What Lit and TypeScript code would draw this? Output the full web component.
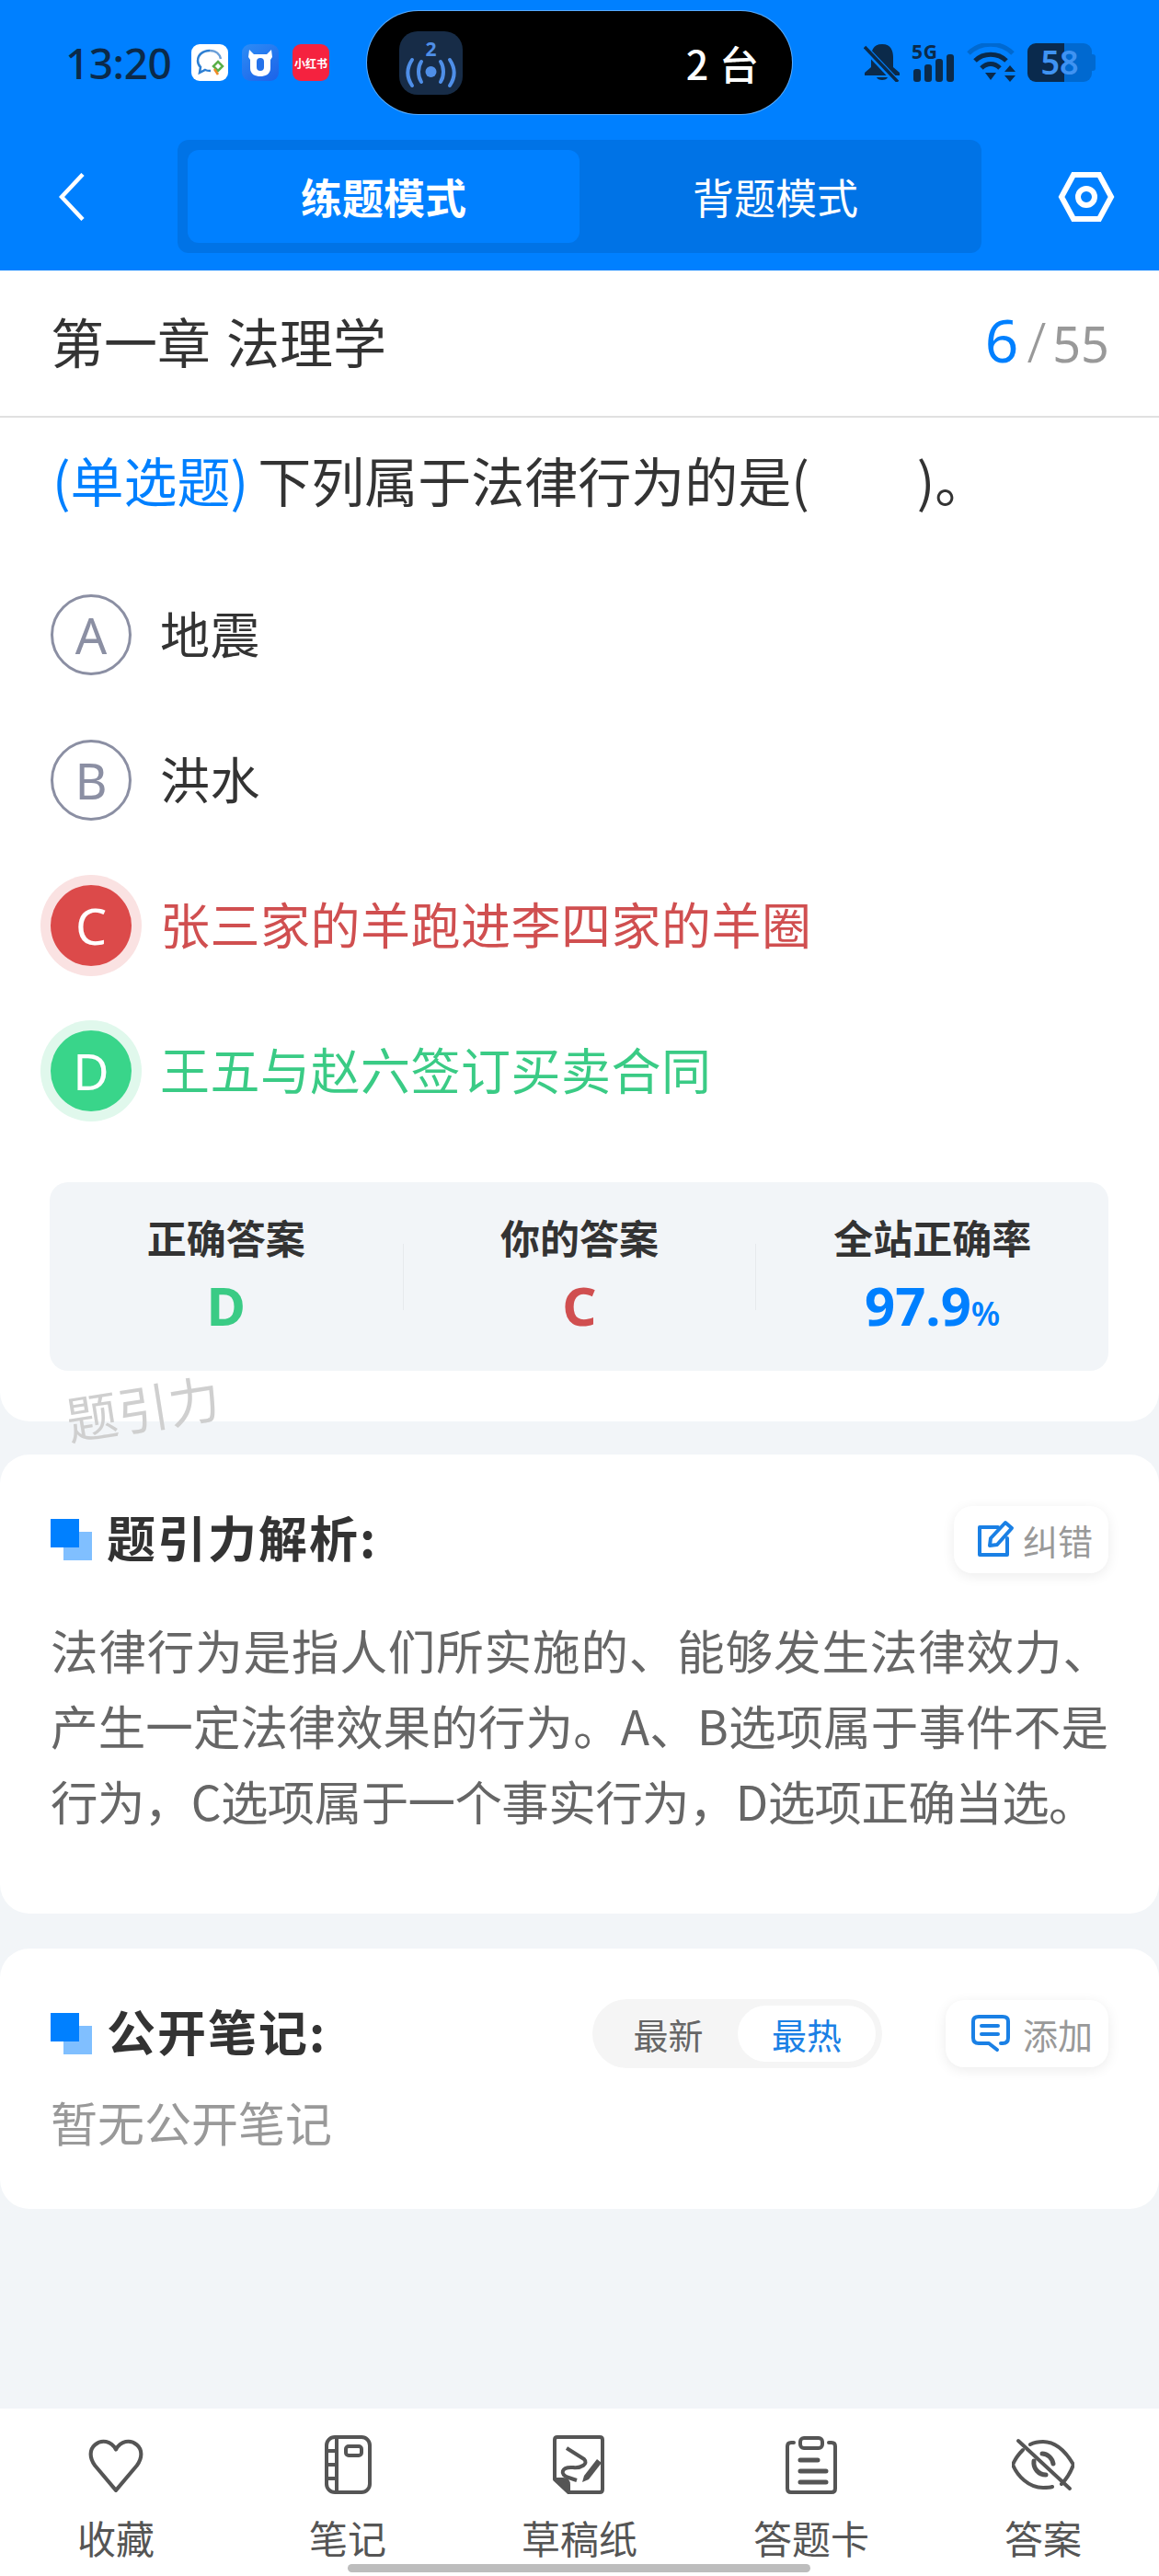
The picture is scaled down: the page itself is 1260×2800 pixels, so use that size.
import { LitElement, html, css, svg } from 'lit';
import { customElement } from 'lit/decorators.js';

type Mark = '' | 'wrong' | 'right';

const options: { key: string; text: string; mark: Mark }[] = [
  { key: 'A', text: '地震', mark: '' },
  { key: 'B', text: '洪水', mark: '' },
  { key: 'C', text: '张三家的羊跑进李四家的羊圈', mark: 'wrong' },
  { key: 'D', text: '王五与赵六签订买卖合同', mark: 'right' },
];

const heart = svg`<path d="M31 55 L9 29 C3 21 3 12 9 7 C16 1 26 3 31 12 C36 3 46 1 53 7 C59 12 59 21 53 29 Z" />`;
const notebook = svg`<rect x="9" y="2" width="47" height="60" rx="9" /><path d="M20 2 V62 M9 17 H20 M9 32 H20 M9 47 H20" /><rect x="30" y="12" width="17" height="10" rx="3" />`;
const draft = svg`<path d="M8 2 H54 Q57 2 57 5 V59 Q57 62 54 62 H20 L5 48 V5 Q5 2 8 2 Z" /><path d="M5 48 H14 Q20 48 20 54 V62" fill="#555" /><path d="M18 14 L37 26 C42 31 34 36 25 35 C12 34 10 43 20 46 L29 49" /><path d="M37 44 L51 26 L56 30 L42 48 L35 51 Z" fill="#555" stroke="none" />`;
const card = svg`<path d="M13 8 H10 Q6 8 6 12 V58 Q6 62 10 62 H54 Q58 62 58 58 V12 Q58 8 54 8 H51" /><rect x="20" y="3" width="24" height="11" rx="4" /><path d="M20 27 H39 M20 39 H48 M20 51 H48" stroke-width="5" />`;
const eye = svg`<path d="M20 10 C24 8 30 7 34 7 C50 7 60 20 67 32 C64 40 60 47 54 53" /><path d="M12 16 C7 21 3 27 1 32 C6 44 18 57 34 57 C38 57 41 57 44 56" /><path d="M33 20 C39 20 44 25 45 31 M24 28 C23 36 29 43 37 43" stroke-width="5" /><path d="M7 6 L63 58" />`;

@customElement('tab-item')
class TabItem extends LitElement {
  static properties = { label: { type: String } };
  label = '';

  static styles = css`
    :host {
      flex: 1;
      display: flex;
      flex-direction: column;
      align-items: center;
    }
    span {
      margin-top: 18px;
      font-size: 42px;
      line-height: 58px;
      color: #555;
    }
  `;

  render() {
    return html`<slot></slot><span>${this.label}</span>`;
  }
}

@customElement('app-root')
export class AppRoot extends LitElement {
  static styles = css`
    :host {
      display: block;
      width: 1260px;
      height: 2800px;
      position: relative;
      overflow: hidden;
      background: #f2f5f8;
      font-family: 'Noto Sans CJK SC', 'Noto Sans', sans-serif;
      color: #333;
    }
    .top {
      height: 294px;
      background: #0080ff;
    }
    .status {
      height: 152px;
      padding-left: 71px;
      display: flex;
      align-items: flex-start;
      box-sizing: border-box;
    }
    .time {
      margin-top: 38px;
      width: 137px;
      font-family: 'Noto Sans', sans-serif;
      font-size: 46px;
      font-weight: 500;
      line-height: 60px;
      color: #0b2a4a;
      letter-spacing: -0.5px;
    }
    .apps {
      margin-top: 48px;
      display: flex;
      gap: 15px;
    }
    .app {
      width: 40px;
      height: 40px;
      border-radius: 9px;
      display: flex;
      align-items: center;
      justify-content: center;
      overflow: hidden;
    }
    .app svg {
      width: 40px;
      height: 40px;
    }
    .app.white {
      background: #fff;
    }
    .app.blue {
      background: linear-gradient(145deg, #2d8cf5, #1c62e8);
    }
    .app.red {
      background: #f5223f;
      color: #fff;
      font-size: 12px;
      font-weight: 700;
      white-space: nowrap;
    }
    .island {
      margin: 12px 0 0 41px;
      width: 462px;
      height: 112px;
      box-sizing: border-box;
      border-radius: 56px;
      background: #000;
      box-shadow: 0 0 0 1px rgba(255, 255, 255, 0.35);
      display: flex;
      align-items: center;
      padding: 0 36px 0 35px;
      justify-content: space-between;
    }
    .island svg {
      width: 69px;
      height: 69px;
      display: block;
    }
    .island b {
      font-family: 'Noto Sans CJK SC', sans-serif;
      font-weight: 500;
      font-size: 43px;
      color: #fff;
      word-spacing: 2px;
    }
    .sys {
      margin: 47px 0 0 78px;
      display: flex;
      align-items: flex-start;
      color: #0b2a4a;
    }
    .sys svg {
      display: block;
      height: 42px;
    }
    .battery {
      margin-left: 12px;
      width: 70px;
      height: 42px;
      border-radius: 9px;
      background: linear-gradient(90deg, #0a2a4d 0 40px, #0069d0 40px);
      color: #3f93f2;
      font-family: 'Noto Sans', sans-serif;
      font-size: 36px;
      font-weight: 600;
      line-height: 42px;
      text-align: center;
    }
    .nub {
      width: 4px;
      height: 18px;
      margin-top: 12px;
      border-radius: 0 3px 3px 0;
      background: #0069d0;
    }
    .nav {
      height: 123px;
      display: flex;
      align-items: center;
    }
    .back {
      width: 28px;
      height: 52px;
      margin-left: 64px;
      fill: none;
      stroke: #fff;
      stroke-width: 4.5;
    }
    .seg {
      margin-left: 101px;
      width: 874px;
      height: 123px;
      box-sizing: border-box;
      padding: 11px;
      border-radius: 12px;
      background: #0073e6;
      display: flex;
    }
    .seg div {
      flex: 1;
      border-radius: 12px;
      display: flex;
      align-items: center;
      justify-content: center;
      font-size: 45px;
      color: #fff;
    }
    .seg .on {
      background: #0080ff;
      font-weight: 700;
    }
    .hex {
      width: 62px;
      height: 56px;
      margin-left: 83px;
      fill: none;
      stroke: #fff;
      stroke-width: 6;
    }
    .card {
      background: #fff;
      border-radius: 32px;
      margin-bottom: 36px;
    }
    .main {
      height: 1251px;
      border-radius: 0 0 32px 32px;
    }
    .chapter {
      height: 160px;
      box-sizing: border-box;
      border-bottom: 2px solid #e0e0e0;
      padding: 0 54px 7px 55px;
      display: flex;
      align-items: center;
      justify-content: space-between;
      font-size: 58px;
      color: #333;
      word-spacing: 4px;
    }
    .count {
      font-family: 'Noto Sans', sans-serif;
      font-size: 54px;
      color: #999;
      display: flex;
      align-items: baseline;
    }
    .count b {
      font-size: 64px;
      font-weight: 400;
      color: #0080ff;
    }
    .count i {
      font-style: normal;
      font-size: 60px;
      margin: 0 7px 0 9px;
      font-weight: 300;
    }
    .question {
      margin: 23px 0 0 57px;
      font-size: 58px;
      line-height: 88px;
      white-space: pre;
      color: #333;
    }
    .question em {
      font-style: normal;
      color: #0080ff;
      margin-right: -3px;
    }
    .options {
      margin: 81px 0 0 55px;
      display: flex;
      flex-direction: column;
      gap: 70px;
    }
    .option {
      height: 88px;
      display: flex;
      align-items: center;
      gap: 31px;
      font-size: 54px;
      letter-spacing: 0.5px;
    }
    .option span {
      margin-top: -6px;
    }
    .dot {
      width: 88px;
      height: 88px;
      box-sizing: border-box;
      border-radius: 50%;
      border: 3px solid #8b8fa3;
      color: #8b8fa3;
      display: flex;
      align-items: center;
      justify-content: center;
      font-family: 'Noto Sans', sans-serif;
      font-size: 54px;
      font-weight: 400;
      letter-spacing: 0;
    }
    .wrong {
      color: #d04f50;
    }
    .right {
      color: #3acb85;
    }
    .wrong .dot,
    .right .dot {
      border: 0;
      color: #fff;
    }
    .wrong .dot {
      background: #dc4a4a;
      box-shadow: 0 0 0 11px #fae2e2;
    }
    .right .dot {
      background: #39d58a;
      box-shadow: 0 0 0 11px #e0f8ec;
    }
    .stats {
      margin: 77px 55px 0 54px;
      height: 205px;
      border-radius: 20px;
      background: #f2f5f8;
      display: grid;
      grid-template-columns: repeat(3, 1fr);
      align-items: center;
    }
    .stat {
      height: 72px;
      box-sizing: border-box;
      padding-bottom: 12px;
      display: flex;
      flex-direction: column;
      align-items: center;
      justify-content: center;
      position: relative;
      text-align: center;
    }
    .stat + .stat {
      border-left: 1px solid #e6e9ed;
    }
    .stat span {
      font-size: 43px;
      line-height: 58px;
      font-weight: 700;
      color: #333;
      white-space: nowrap;
    }
    .stat b {
      margin-top: 17px;
      height: 58px;
      flex: none;
      font-family: 'Noto Sans', sans-serif;
      font-size: 58px;
      line-height: 58px;
      font-weight: 700;
    }
    .stat .rate {
      color: #0080ff;
    }
    .stat small {
      font-size: 36px;
      line-height: 1;
      font-weight: 600;
    }
    .watermark {
      position: absolute;
      left: 72px;
      top: 1501px;
      font-size: 56px;
      color: #cfcfcf;
      transform: rotate(-9deg);
      transform-origin: left center;
    }
    .sec {
      padding: 55px 55px 0;
    }
    .sec.analysis {
      height: 444px;
      margin-bottom: 38px;
    }
    .sec.notes {
      height: 228px;
    }
    .head {
      display: flex;
      align-items: center;
      height: 74px;
    }
    .blocks {
      width: 45px;
      height: 45px;
      background: linear-gradient(#0080ff, #0080ff) left top / 31px 31px no-repeat,
        linear-gradient(#80bfff, #80bfff) right bottom / 31px 31px no-repeat;
      margin-right: 16px;
      flex: none;
    }
    h2 {
      margin: 0;
      padding-bottom: 6px;
      font-size: 53px;
      font-weight: 700;
      color: #333;
      flex: 1;
      letter-spacing: 2px;
    }
    .btn {
      height: 73px;
      padding: 0 17px 0 24px;
      border-radius: 20px;
      background: #fff;
      box-shadow: 0 3px 14px rgba(0, 0, 0, 0.08);
      display: flex;
      align-items: center;
      gap: 9px;
      font-size: 38px;
      color: #999;
    }
    .btn.wide {
      padding-left: 28px;
      gap: 14px;
    }
    .btn svg {
      width: 42px;
      height: 42px;
      fill: none;
      stroke: #1a80e5;
      stroke-width: 4;
      stroke-linejoin: round;
      stroke-linecap: round;
    }
    .analysis p {
      margin: 42px 0 0;
      font-size: 51.5px;
      line-height: 82px;
      color: #666;
      white-space: nowrap;
    }
    .analysis span {
      display: block;
    }
    .analysis .l1 {
      letter-spacing: 0.9px;
    }
    .analysis .l2 {
      letter-spacing: 0.15px;
    }
    .analysis .l3 {
      letter-spacing: -0.6px;
    }
    .sorter {
      width: 315px;
      height: 75px;
      box-sizing: border-box;
      padding: 7px;
      border-radius: 38px;
      background: #f5f5f5;
      display: flex;
      margin-right: 69px;
      font-size: 38px;
      color: #666;
    }
    .sorter div {
      flex: 1;
      display: flex;
      align-items: center;
      justify-content: center;
      border-radius: 31px;
    }
    .sorter .on {
      flex: none;
      width: 150px;
      background: #fff;
      color: #1a80e5;
    }
    .notes p {
      margin: 24px 0 0;
      font-size: 51px;
      line-height: 70px;
      color: #999;
    }
    .bar {
      position: absolute;
      left: 0;
      right: 0;
      bottom: 0;
      height: 182px;
      box-sizing: border-box;
      padding-top: 29px;
      background: #fff;
      display: flex;
    }
    .home {
      position: absolute;
      left: 378px;
      bottom: 4px;
      width: 503px;
      height: 9px;
      border-radius: 5px;
      background: #bdbdbd;
    }
  `;

  render() {
    return html`
      <div class="top">
        <div class="status">
          <div class="time">13:20</div>
          <div class="apps">
            <div class="app white">
              <svg viewBox="0 0 40 40" fill="none" stroke-width="2.5">
                <path d="M20 7 C12 7 7 12 7 18 C7 21 8 23 10 25 L9 31 L15 28 C17 29 19 29 21 29" stroke="#2d7fd3" />
                <path d="M20 7 C27 7 31 11 32 16" stroke="#6a9fd8" />
                <path d="M29 19 L34 24 L29 29 L24 24 Z" stroke="#5bb04a" />
                <path d="M25 27 L29 33" stroke="#f08a24" />
              </svg>
            </div>
            <div class="app blue">
              <svg viewBox="0 0 40 40" fill="none">
                <path d="M8 6 L13 11 H27 L32 6 L33 14 L31 17 V26 C31 33 25 35 20 35 C15 35 9 33 9 26 V17 L7 14 Z" fill="#fff" />
                <rect x="16" y="15" width="8" height="14" rx="4" fill="#2472ea" />
              </svg>
            </div>
            <div class="app red">小红书</div>
          </div>
          <div class="island">
            <svg viewBox="0 0 69 69">
              <rect width="69" height="69" rx="20" fill="#172c47" />
              <text x="34.5" y="27" text-anchor="middle" font-family="Noto Sans" font-size="21" font-weight="700" fill="#4f8fe8">2</text>
              <circle cx="34.5" cy="44" r="6" fill="#4f8fe8" />
              <path d="M24 33 C20 39 20 49 24 55 M45 33 C49 39 49 49 45 55 M14 31 C8 40 8 50 14 59 M55 31 C61 40 61 50 55 59" fill="none" stroke="#4f8fe8" stroke-width="4" stroke-linecap="round" />
            </svg>
            <b>2 台</b>
          </div>
          <div class="sys">
            <svg viewBox="0 0 40 42" width="40" fill="#0b2a4a">
              <path d="M20 1 C10 1 8 9 8 15 V26 L1 32 V35 H39 V32 L32 26 V15 C32 9 30 1 20 1 Z" />
              <path d="M14 37 H26 C25 41 15 41 14 37 Z" />
              <path d="M2 6 L36 42" stroke="#0080ff" stroke-width="7" />
              <path d="M1 4 L37 42" stroke="#0b2a4a" stroke-width="3.5" />
            </svg>
            <svg viewBox="0 0 50 42" width="50" style="margin-left:12px" fill="#0b2a4a">
              <text x="0" y="17" font-family="Noto Sans" font-size="21" font-weight="700" textLength="28">5G</text>
              <rect x="2" y="28" width="8" height="14" rx="3" />
              <rect x="14" y="23" width="8" height="19" rx="3" />
              <rect x="26" y="17" width="8" height="25" rx="3" />
              <rect x="38" y="12" width="8" height="30" rx="3" />
            </svg>
            <svg viewBox="0 0 54 42" width="54" style="margin-left:10px" fill="none">
              <path d="M2 11 C15 -2 37 -2 50 11" stroke="#0069d0" stroke-width="5" />
              <path d="M9 19 C18 10 34 10 43 19" stroke="#0b2a4a" stroke-width="5" />
              <path d="M16 27 C22 21 30 21 36 27" stroke="#0b2a4a" stroke-width="5" />
              <path d="M20 32 H32 L26 40 Z" fill="#0b2a4a" />
              <path d="M47 24 L53 31 H41 Z M47 42 L41 35 H53 Z" fill="#0b2a4a" />
            </svg>
            <div class="battery">58</div>
            <div class="nub"></div>
          </div>
        </div>
        <div class="nav">
          <svg class="back" viewBox="0 0 28 52"><path d="M26 1.5 L3 26 L26 50.5" /></svg>
          <div class="seg">
            <div class="on">练题模式</div>
            <div>背题模式</div>
          </div>
          <svg class="hex" viewBox="0 0 62 56">
            <path d="M17 4 H45 L58 28 L45 52 H17 L4 28 Z" />
            <circle cx="31" cy="28" r="9" />
          </svg>
        </div>
      </div>

      <div class="card main">
        <div class="chapter">
          <span>第一章 法理学</span>
          <span class="count"><b>6</b><i>/</i>55</span>
        </div>
        <div class="question"><em>(单选题)</em> 下列属于法律行为的是(         )。</div>
        <div class="options">
          ${options.map(
            (o) => html`
              <div class="option ${o.mark}">
                <div class="dot">${o.key}</div>
                <span>${o.text}</span>
              </div>
            `,
          )}
        </div>
        <div class="stats">
          <div class="stat"><span>正确答案</span><b class="right">D</b></div>
          <div class="stat"><span>你的答案</span><b class="wrong">C</b></div>
          <div class="stat"><span>全站正确率</span><b class="rate">97.9<small>%</small></b></div>
        </div>
      </div>
      <div class="watermark">题引力</div>

      <div class="card sec analysis">
        <div class="head">
          <i class="blocks"></i>
          <h2>题引力解析:</h2>
          <div class="btn">
            <svg viewBox="0 0 42 42">
              <path d="M24 8 H4 V38 H34 V20" />
              <path d="M15 28 L16 20 L32 3 L39 9 L23 27 Z" />
            </svg>
            纠错
          </div>
        </div>
        <p>
          <span class="l1">法律行为是指人们所实施的、能够发生法律效力、</span>
          <span class="l2">产生一定法律效果的行为。A、B选项属于事件不是</span>
          <span class="l3">行为，C选项属于一个事实行为，D选项正确当选。</span>
        </p>
      </div>

      <div class="card sec notes">
        <div class="head">
          <i class="blocks"></i>
          <h2>公开笔记:</h2>
          <div class="sorter">
            <div>最新</div>
            <div class="on">最热</div>
          </div>
          <div class="btn wide">
            <svg viewBox="0 0 42 42">
              <path d="M19 32 H8 Q2 32 2 26 V8 Q2 3 8 3 H34 Q40 3 40 8 V26 Q40 32 34 32 H32 M19 32 L28 39" />
              <path d="M11 13 H29 M11 22 H29" />
            </svg>
            添加
          </div>
        </div>
        <p>暂无公开笔记</p>
      </div>

      <div class="bar">
        <tab-item label="收藏"><svg viewBox="0 -3 62 62" width="64" height="64" fill="none" stroke="#555" stroke-width="4" stroke-linejoin="round">${heart}</svg></tab-item>
        <tab-item label="笔记"><svg viewBox="0 0 64 64" width="64" height="64" fill="none" stroke="#555" stroke-width="4" stroke-linejoin="round">${notebook}</svg></tab-item>
        <tab-item label="草稿纸"><svg viewBox="0 0 64 64" width="64" height="64" fill="none" stroke="#555" stroke-width="4" stroke-linejoin="round">${draft}</svg></tab-item>
        <tab-item label="答题卡"><svg viewBox="0 0 64 64" width="64" height="64" fill="none" stroke="#555" stroke-width="4" stroke-linecap="round" stroke-linejoin="round">${card}</svg></tab-item>
        <tab-item label="答案"><svg viewBox="0 0 68 64" width="68" height="64" fill="none" stroke="#555" stroke-width="4" stroke-linecap="round" stroke-linejoin="round">${eye}</svg></tab-item>
      </div>
      <div class="home"></div>
    `;
  }
}
